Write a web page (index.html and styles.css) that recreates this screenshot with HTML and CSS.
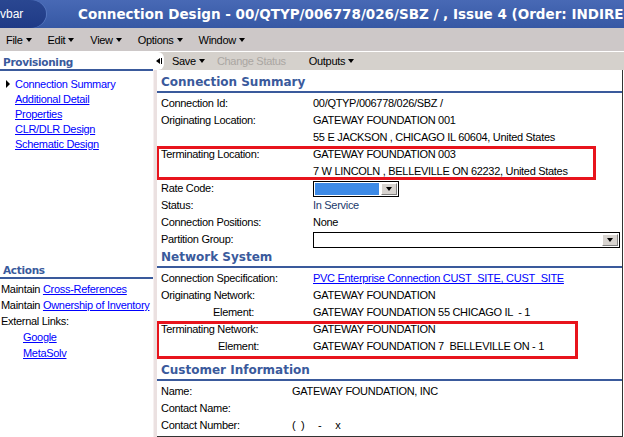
FILE: index.html
```html
<!DOCTYPE html>
<html lang="en">

<head>
    <meta charset="UTF-8">
    <title>Connection Design</title>
    <link rel="stylesheet" href="styles.css">
</head>

<body>
    <div class="titlebar">
        <span class="tab">vbar</span>
        <span class="title">Connection Design - 00/QTYP/006778/026/SBZ / , Issue 4 (Order: INDIRECT)</span>
    </div>
    <div class="menubar">
        <span class="menu">File</span>
        <span class="menu">Edit</span>
        <span class="menu">View</span>
        <span class="menu">Options</span>
        <span class="menu">Window</span>
    </div>
    <div class="main">
        <div class="side">
            <div class="side-head">Provisioning</div>
            <ul class="nav">
                <li class="current"><a>Connection Summary</a></li>
                <li><a href="#">Additional Detail</a></li>
                <li><a href="#">Properties</a></li>
                <li><a href="#">CLR/DLR Design</a></li>
                <li><a href="#">Schematic Design</a></li>
            </ul>
            <div class="side-head actions-head">Actions</div>
            <ul class="actions">
                <li>Maintain <a href="#">Cross-References</a></li>
                <li>Maintain <a href="#">Ownership of Inventory</a></li>
                <li>External Links:</li>
                <li class="ext"><a href="#">Google</a></li>
                <li class="ext"><a href="#">MetaSolv</a></li>
            </ul>
        </div>
        <div class="pane">
            <div class="toolbar">
                <span class="collapse"><i class="tri"></i><i class="bar"></i></span>
                <span class="menu save">Save</span>
                <span class="disabled">Change Status</span>
                <span class="menu outputs">Outputs</span>
            </div>
            <div class="pane-body">
                <div class="splitter"></div>
                <div class="content">
                    <h3>Connection Summary</h3>
                    <div class="row"><span>Connection Id:</span><span>00/QTYP/006778/026/SBZ /</span></div>
                    <div class="row"><span>Originating Location:</span><span>GATEWAY FOUNDATION 001</span></div>
                    <div class="row"><span></span><span>55 E JACKSON , CHICAGO IL 60604, United States</span></div>
                    <div class="hl hl-loc">
                        <div class="row"><span>Terminating Location:</span><span>GATEWAY FOUNDATION 003</span></div>
                        <div class="row"><span></span><span>7 W LINCOLN , BELLEVILLE ON 62232, United States</span></div>
                    </div>
                    <div class="row"><span>Rate Code:</span><span class="select rate"><span class="sel-val"></span><span class="sel-btn"></span></span></div>
                    <div class="row"><span>Status:</span><span class="status">In Service</span></div>
                    <div class="row"><span>Connection Positions:</span><span>None</span></div>
                    <div class="row"><span>Partition Group:</span><span class="select part"><span class="sel-val"></span><span class="sel-btn"></span></span></div>

                    <h3>Network System</h3>
                    <div class="row"><span>Connection Specification:</span><span><a href="#">PVC Enterprise Connection CUST_SITE, CUST_SITE</a></span></div>
                    <div class="row"><span>Originating Network:</span><span>GATEWAY FOUNDATION</span></div>
                    <div class="row"><span class="sub">Element:</span><span class="pre">GATEWAY FOUNDATION 55 CHICAGO IL  - 1</span></div>
                    <div class="hl hl-net">
                        <div class="row"><span>Terminating Network:</span><span>GATEWAY FOUNDATION</span></div>
                        <div class="row"><span class="sub">Element:</span><span class="pre">GATEWAY FOUNDATION 7  BELLEVILLE ON - 1</span></div>
                    </div>

                    <h3 class="cust-head">Customer Information</h3>
                    <div class="row cust"><span>Name:</span><span>GATEWAY FOUNDATION, INC</span></div>
                    <div class="row cust"><span>Contact Name:</span><span></span></div>
                    <div class="row cust"><span>Contact Number:</span><span class="pre">(  )     -     x</span></div>
                </div>
            </div>
        </div>
    </div>
</body>

</html>
```

FILE: styles.css
```css
* {
    margin: 0;
    padding: 0;
    box-sizing: border-box;
}

html {
    height: 100%;
}

body {
    width: 624px;
    height: 437px;
    overflow: hidden;
    display: flex;
    flex-direction: column;
    background-color: #fff;
    color: #000;
    font-family: "Liberation Sans", Arial, sans-serif;
    font-size: 11px;
    letter-spacing: -0.3px;
}

a {
    color: #0000ff;
    text-decoration: underline;
}

ul {
    list-style: none;
}

/* title bar */
.titlebar {
    height: 28px;
    flex: none;
    display: flex;
    align-items: center;
    white-space: nowrap;
    overflow: hidden;
    color: #fff;
    background: linear-gradient(#4869b5, #3658a4);
}

.tab {
    width: 46px;
    height: 28px;
    flex: none;
    display: flex;
    align-items: center;
    margin-right: 32px;
    font-size: 12px;
    letter-spacing: 0;
    background: linear-gradient(#2a4791, #1f3a86);
    border-radius: 0 16px 16px 0 / 0 14px 14px 0;
    box-shadow: 1px 0 0 #5576bf;
}

.title {
    font-family: "DejaVu Sans", Verdana, sans-serif;
    font-weight: bold;
    font-size: 13.5px;
    letter-spacing: 0;
}

/* menus */
.menubar {
    height: 24px;
    flex: none;
    display: flex;
    align-items: center;
    gap: 16px;
    padding-left: 6px;
    background-color: #cdc8c8;
    border-bottom: 1px solid #fff;
}

.menu::after {
    content: "";
    display: inline-block;
    margin-left: 3px;
    vertical-align: 2px;
    border-left: 3.5px solid transparent;
    border-right: 3.5px solid transparent;
    border-top: 4px solid #000;
}

.main {
    flex: 1;
    display: flex;
    min-height: 0;
}

/* left column */
.side {
    width: 153px;
    flex: none;
    display: flex;
    flex-direction: column;
    overflow: hidden;
    white-space: nowrap;
}

.side-head {
    height: 19px;
    padding: 4px 3px 0;
    line-height: 13px;
    font-family: "DejaVu Sans", Verdana, sans-serif;
    font-weight: bold;
    font-size: 10.5px;
    letter-spacing: -0.3px;
    color: #3a5a9c;
    border-bottom: 2px solid #3a5a9c;
}

.nav {
    padding-top: 6px;
    line-height: 15px;
}

.nav li {
    padding-left: 15px;
}

.current a {
    text-decoration: none;
}

.current::before {
    content: "";
    display: inline-block;
    margin-left: -9px;
    margin-right: 5px;
    border-top: 4px solid transparent;
    border-bottom: 4px solid transparent;
    border-left: 4px solid #000;
}

.actions-head {
    margin-top: 108px;
}

.actions {
    padding: 2px 0 0 1px;
    line-height: 16px;
}

.actions .ext {
    padding-left: 22px;
}

/* right pane */
.pane {
    flex: 1;
    display: flex;
    flex-direction: column;
    min-width: 0;
}

.toolbar {
    height: 18px;
    flex: none;
    display: flex;
    align-items: center;
    background-color: #d5d1cc;
}

.collapse {
    width: 11px;
    height: 18px;
    display: flex;
    align-items: center;
    padding-left: 3px;
    background-color: #fff;
    border-radius: 0 6px 6px 0;
}

.collapse .tri {
    border-top: 3px solid transparent;
    border-bottom: 3px solid transparent;
    border-right: 4px solid #000;
}

.collapse .bar {
    width: 1px;
    height: 6px;
    margin-left: 1px;
    background-color: #000;
}

.save {
    margin-left: 8px;
}

.disabled {
    margin-left: 12px;
    color: #aaa6a2;
}

.outputs {
    margin-left: 23px;
}

.pane-body {
    flex: 1;
    display: flex;
    min-height: 0;
}

.splitter {
    width: 4px;
    flex: none;
    background-color: #ebe1e1;
    border-left: 1px solid #f6f0f0;
}

.content {
    flex: 1;
    margin-right: 1px;
    padding-top: 3px;
    border-right: 1px solid #333;
    border-bottom: 1px solid #333;
    overflow: hidden;
    white-space: nowrap;
}

h3 {
    height: 20px;
    margin-bottom: 2px;
    padding-left: 4px;
    line-height: 18px;
    font-family: "DejaVu Sans", Verdana, sans-serif;
    font-size: 12px;
    letter-spacing: 0;
    color: #3a5a9c;
    border-bottom: 2px solid #3a5a9c;
}

.cust-head {
    margin-top: 2px;
}

.row {
    display: grid;
    grid-template-columns: 152px 1fr;
    align-items: center;
    height: 17px;
    padding-left: 4px;
    line-height: 17px;
}

.row.cust {
    grid-template-columns: 131px 1fr;
}

.sub {
    padding-left: 52px;
}

.pre {
    white-space: pre;
}

.status {
    color: #1c3a6c;
}

/* highlight boxes */
.hl {
    margin-left: -1px;
    outline: 3px solid #e8141c;
    outline-offset: -3px;
}

.hl .row {
    padding-left: 5px;
}

.hl .sub {
    padding-left: 57px;
}

.hl-loc {
    margin-right: 26px;
}

.hl-net {
    margin-right: 44px;
    padding-bottom: 4px;
}

/* select boxes */
.select {
    height: 16px;
    display: flex;
    border: 1px solid #000;
    background-color: #fff;
}

.rate {
    width: 86px;
}

.part {
    width: 307px;
}

.sel-val {
    flex: 1;
    margin: 1px;
}

.rate .sel-val {
    background-color: #3d8ae6;
}

.sel-btn {
    width: 16px;
    margin: 1px;
    display: flex;
    align-items: center;
    justify-content: center;
    background-color: #d8d4d0;
    border: 1px solid;
    border-color: #fff #808080 #808080 #fff;
}

.sel-btn::after {
    content: "";
    border-left: 3.5px solid transparent;
    border-right: 3.5px solid transparent;
    border-top: 4px solid #000;
}
```
